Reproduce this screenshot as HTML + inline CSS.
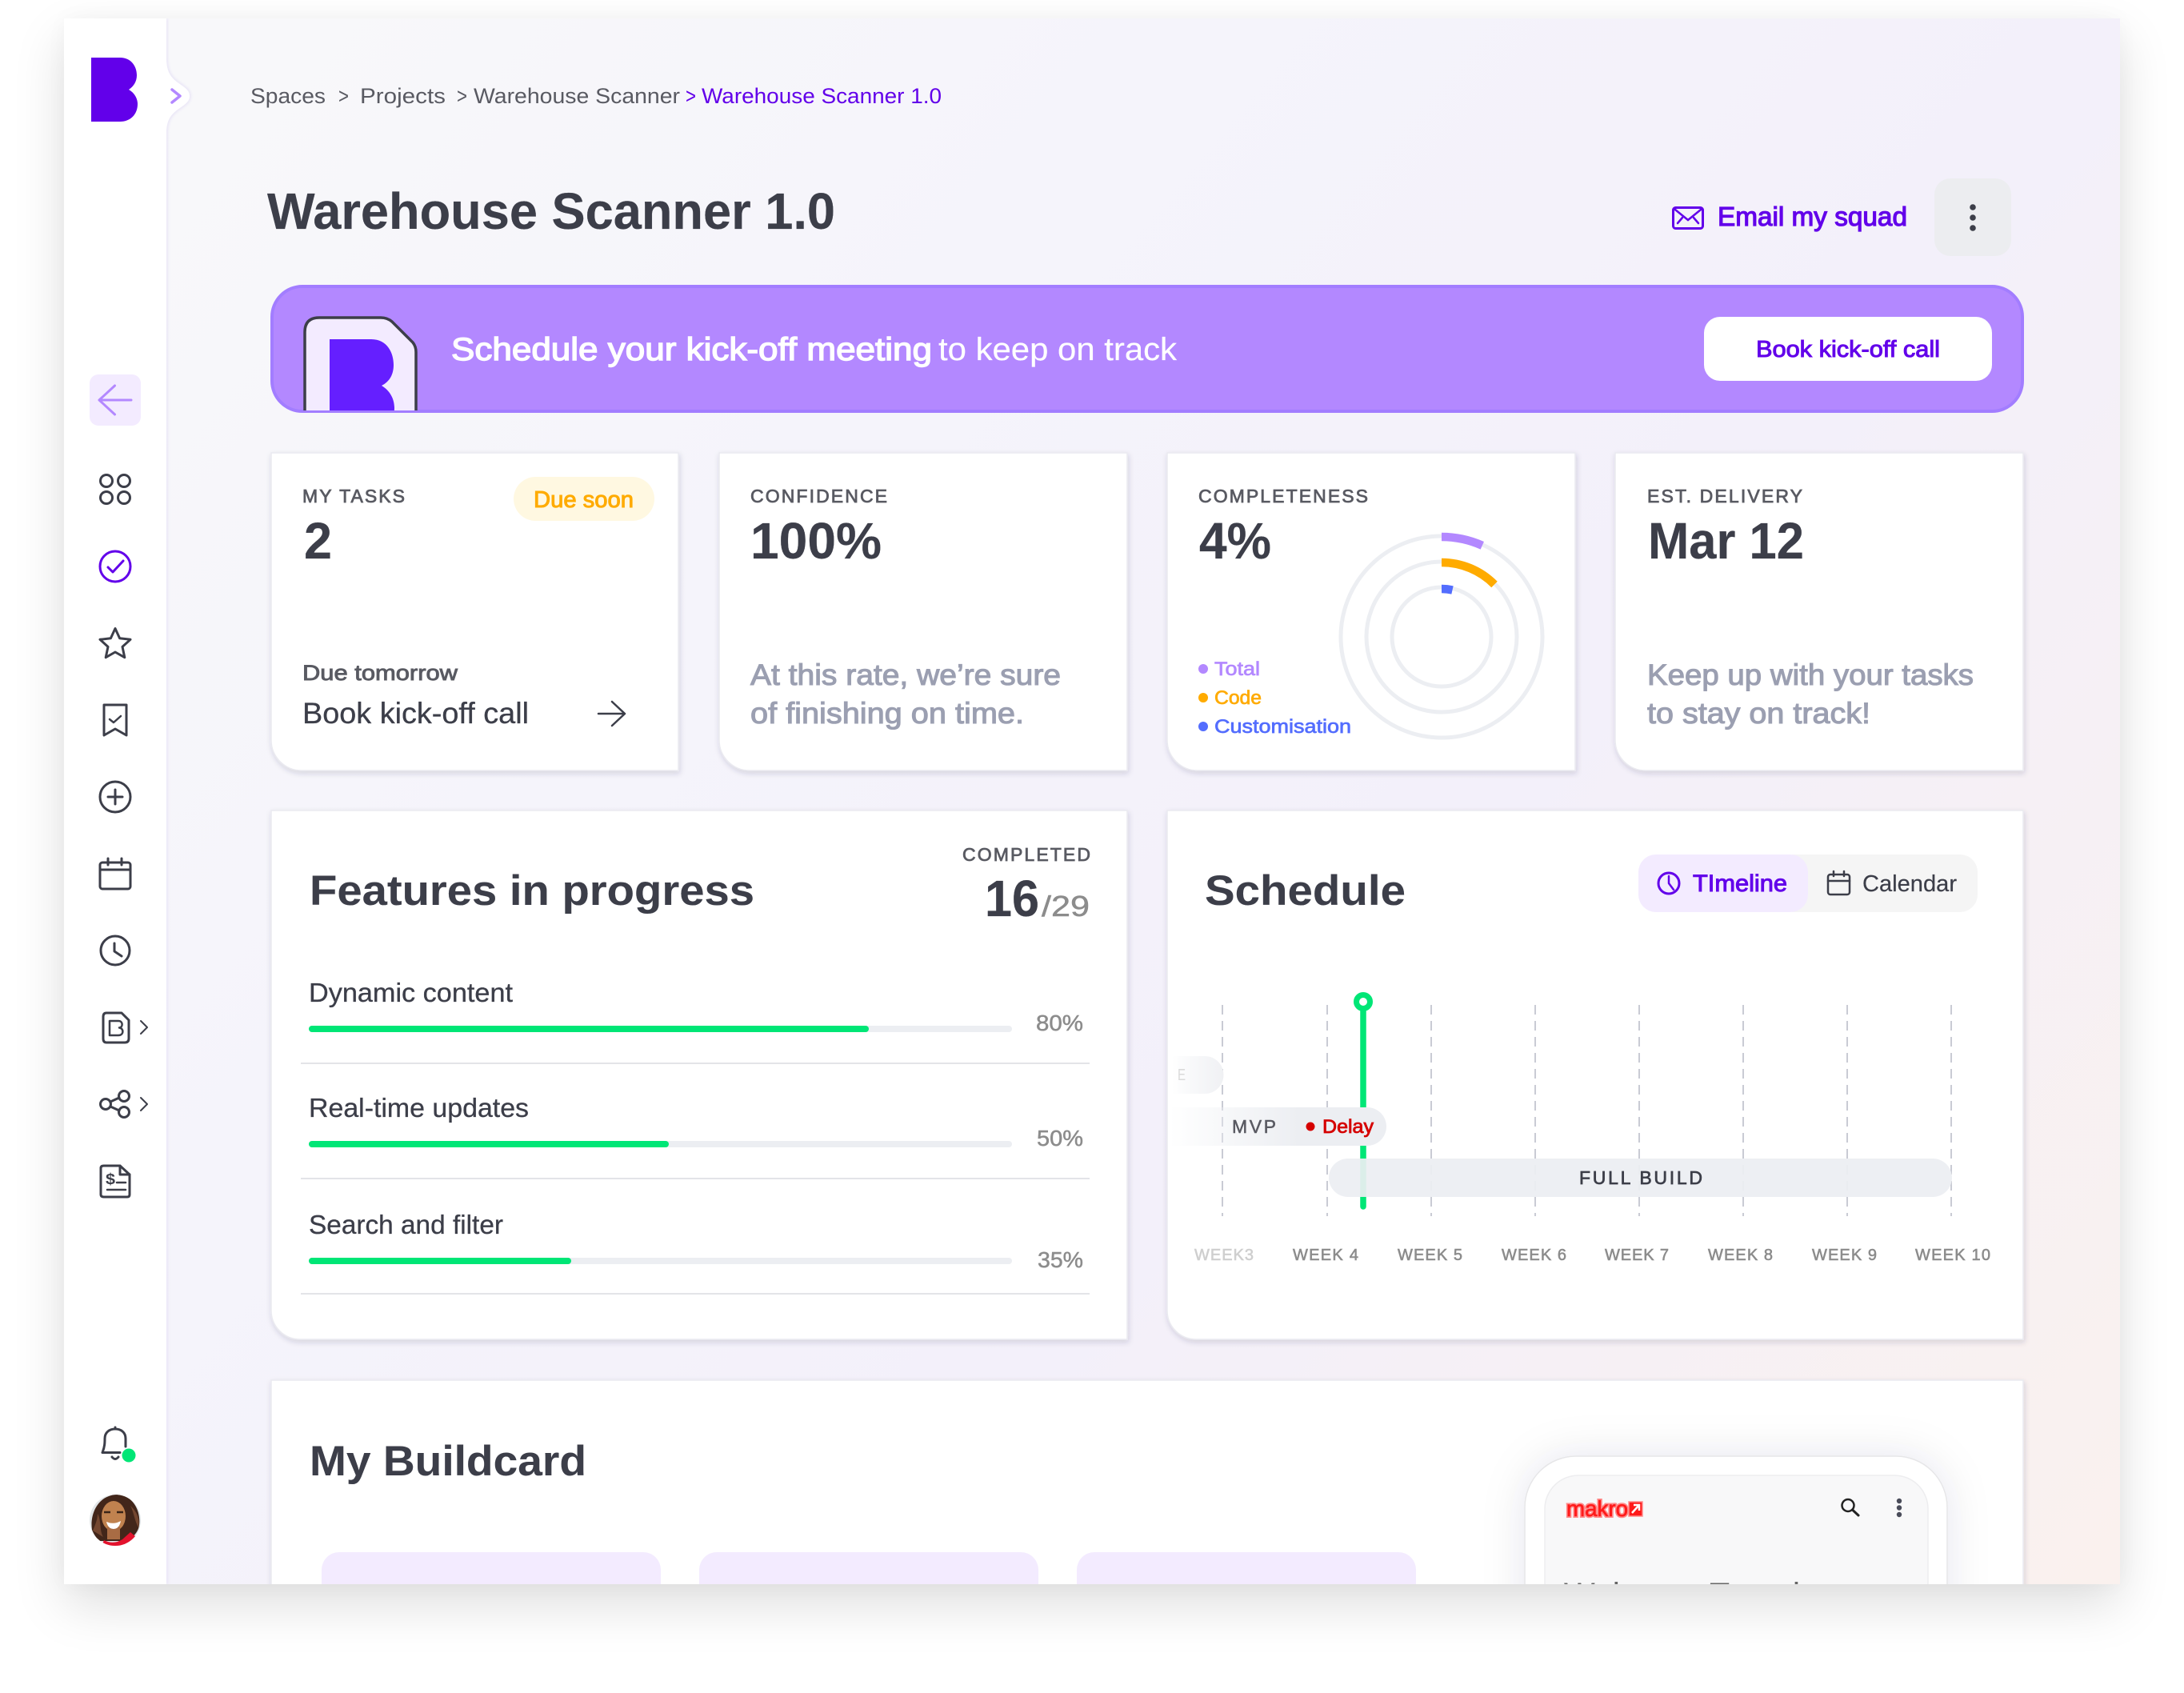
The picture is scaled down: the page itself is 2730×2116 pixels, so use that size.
<!DOCTYPE html>
<html lang="en"><head><meta charset="utf-8"><title>Warehouse Scanner 1.0</title>
<style>
html,body{margin:0;padding:0;background:#fff;width:2730px;height:2116px;overflow:hidden}
#sh{position:absolute;left:80px;top:23px;width:2570px;height:1957px;box-shadow:0 26px 60px rgba(0,0,0,.13),0 0 26px rgba(0,0,0,.03)}
svg{position:absolute;left:0;top:0}
text{font-family:"Liberation Sans",sans-serif;fill:#3c3e49}
.lab{font-size:23px;fill:#595a62;stroke:#595a62;stroke-width:.8}
.big{font-size:64px;font-weight:700;stroke:#3c3e49;stroke-width:.2}
.h2{font-size:53px;font-weight:700;stroke:#3c3e49;stroke-width:.1}
.gr{font-size:37px;fill:#9b9fb1;stroke:#9b9fb1;stroke-width:1.100}
.row{font-size:33px;stroke:#3c3e49;stroke-width:.3}
.pct{font-size:28px;fill:#8c8c8c;stroke:#8c8c8c;stroke-width:.5}
.wk{font-size:20px;fill:#8c8c8c;stroke:#8c8c8c;stroke-width:.6}
.bc{font-size:27px;fill:#595a62}
.i{fill:none;stroke:#3c3e49;stroke-width:3;stroke-linecap:round;stroke-linejoin:round}
.p{fill:#6200ea;stroke:#6200ea}
.d{fill:none;stroke:#c9cbd4;stroke-width:2;stroke-dasharray:12 8}
</style></head><body>
<div id="sh"></div>
<svg width="2730" height="2116" viewBox="0 0 2730 2116" xmlns="http://www.w3.org/2000/svg">
<defs>
<linearGradient id="bg" gradientUnits="userSpaceOnUse" x1="300" y1="23" x2="2650" y2="1980"><stop offset="0" stop-color="#f8f8fa"/><stop offset=".3" stop-color="#f5f4fb"/><stop offset=".6" stop-color="#f3f0fa"/><stop offset="1" stop-color="#faf1ee"/></linearGradient>
<linearGradient id="mv" gradientUnits="userSpaceOnUse" x1="1462" y1="0" x2="1625" y2="0"><stop offset="0" stop-color="#eceef2" stop-opacity="0"/><stop offset="1" stop-color="#eceef2"/></linearGradient>
<linearGradient id="ev" gradientUnits="userSpaceOnUse" x1="1465" y1="0" x2="1529" y2="0"><stop offset="0" stop-color="#eceef2" stop-opacity="0"/><stop offset="1" stop-color="#f0f1f4"/></linearGradient>
<filter id="cs" x="-5%" y="-5%" width="110%" height="112%"><feDropShadow dx="1" dy="3" stdDeviation="3.5" flood-color="#20204a" flood-opacity=".16"/></filter>
<filter id="ps" x="-20%" y="-20%" width="140%" height="140%"><feDropShadow dx="0" dy="0" stdDeviation="26" flood-color="#20204a" flood-opacity=".1"/></filter>
<filter id="ss" x="-50%" y="-5%" width="200%" height="110%"><feGaussianBlur stdDeviation="1.5"/></filter>
<clipPath id="win"><rect x="80" y="23" width="2570" height="1957"/></clipPath>
<clipPath id="ban"><rect x="338" y="356" width="2192" height="158" rx="40"/></clipPath>
<clipPath id="av"><circle cx="144" cy="1900" r="32"/></clipPath>
<clipPath id="phone"><rect x="1931" y="1844" width="479" height="300" rx="42"/></clipPath>
</defs>
<g clip-path="url(#win)">
<rect x="80" y="23" width="2570" height="1957" fill="url(#bg)"/>
<!-- sidebar -->
<path d="M208 23V73C208 90 214 97 222 103C232 110 237 113 237 120C237 127 232 130 222 137C214 143 208 150 208 166V1980" fill="none" stroke="#e8e4f6" stroke-width="3.500" filter="url(#ss)"/>
<path d="M80 23H208V73C208 90 214 97 222 103C232 110 237 113 237 120C237 127 232 130 222 137C214 143 208 150 208 166V1980H80Z" fill="#fff"/>
<path d="M215 112L225 120L215 128" fill="none" stroke="#b388ff" stroke-width="3.500" stroke-linecap="round" stroke-linejoin="round"/>
<path d="M114 72H150C164 72 171 83 171 94C171 102 167 108 161 112C168 116 172 123 172 130C172 143 163 152 150 152H114Z" fill="#6200ea"/>
<rect x="112" y="468" width="64" height="64" rx="11" fill="#f3ebff"/>
<path d="M164 500H124M143.5 482L124 500L143.5 518" fill="none" stroke="#b388ff" stroke-width="3" stroke-linecap="round" stroke-linejoin="round"/>
<g class="i">
<circle cx="133" cy="601" r="7.500"/><circle cx="155" cy="601" r="7.500"/><circle cx="133" cy="622" r="7.500"/><circle cx="155" cy="622" r="7.500"/>
<circle cx="144" cy="708" r="19" style="stroke:#6200ea"/><path d="M135 709L141 715L154 701" style="stroke:#6200ea"/>
<path d="M144 785.500L149.600 797.800L163 799.300L153 808.400L155.800 821.700L144 815L132.200 821.700L135 808.400L125 799.300L138.400 797.800Z"/>
<path d="M130 881H158V919L144 911L130 919Z"/><path d="M137 899L142 903L151 895" style="stroke-width:2.500"/>
<circle cx="144" cy="996" r="19"/><path d="M135 996H153M144 987V1005"/>
<rect x="125" y="1078" width="38" height="33" rx="3"/><path d="M125 1087H163M135 1073V1081M152 1073V1081"/>
<circle cx="144" cy="1188" r="18"/><path d="M143 1179V1189L152 1195"/>
<path d="M133 1266H152L161 1275V1298Q161 1303 156 1303H133Q129 1303 129 1298V1271Q129 1266 133 1266Z"/>
<path d="M137 1276H148C154 1276 154 1284 149 1284.500C155 1285 155 1294 148 1294H137Z" style="stroke-width:2.500"/>
<path d="M176 1276L184 1284L176 1292" style="stroke-width:2"/>
<circle cx="132" cy="1380" r="6.500"/><circle cx="155" cy="1370" r="6.500"/><circle cx="155" cy="1390" r="6.500"/><path d="M138 1377L149 1372M138 1383L149 1388"/>
<path d="M176 1372L184 1380L176 1388" style="stroke-width:2"/>
<path d="M130 1457H150L162 1468V1493Q162 1496 159 1496H130Q126 1496 126 1493V1460Q126 1457 130 1457Z"/><path d="M150 1457V1468H162"/>
<path d="M146 1478H157M134 1487H157" style="stroke-width:2.500"/>
<path d="M128 1815.500C131 1808 131 1803 131 1798C131 1790 137 1786 144 1786C151 1786 157 1790 157 1798V1808M128 1815.500H150M144 1784V1786M140 1821Q144 1826 148 1821"/>
</g>
<text x="132" y="1480" font-size="19" font-weight="700" textLength="12" lengthAdjust="spacingAndGlyphs">$</text>
<circle cx="161" cy="1819" r="8.500" fill="#00e676"/>
<!-- avatar -->
<g clip-path="url(#av)">
<rect x="112" y="1868" width="64" height="64" fill="#e1e5e7"/>
<path d="M115 1912C112 1893 122 1869 146 1868C169 1869 176 1892 174 1906C173 1915 166 1921 160 1926L124 1926C120 1922 117 1917 115 1912Z" fill="#42261a"/>
<path d="M116 1913C119 1906 122 1899 122 1892C127 1901 124 1913 129 1921ZM173 1909C168 1900 167 1889 163 1882C172 1890 175 1900 173 1909Z" fill="#744730"/>
<ellipse cx="142" cy="1895" rx="15" ry="19" fill="#c0824f"/>
<rect x="134" y="1908" width="16" height="16" fill="#a96c44"/>
<path d="M133 1902Q142 1906 151 1901Q149 1911 142 1911Q135 1911 133 1902Z" fill="#fff"/>
<path d="M130 1890h8M146 1890h8" stroke="#3a2418" stroke-width="2.500"/>
<path d="M126 1934L130 1925Q142 1931 153 1924L163 1915L176 1926V1936H126Z" fill="#e3122d"/>
</g>
<!-- breadcrumb -->
<text class="bc" x="313" y="129" textLength="94" lengthAdjust="spacingAndGlyphs">Spaces</text>
<text class="bc" x="423" y="129" textLength="13" lengthAdjust="spacingAndGlyphs">&gt;</text>
<text class="bc" x="450" y="129" textLength="107" lengthAdjust="spacingAndGlyphs">Projects</text>
<text class="bc" x="571" y="129" textLength="13" lengthAdjust="spacingAndGlyphs">&gt;</text>
<text class="bc" x="592" y="129" textLength="258" lengthAdjust="spacingAndGlyphs">Warehouse Scanner</text>
<text class="bc" x="857" y="129" textLength="13" lengthAdjust="spacingAndGlyphs" style="fill:#6200ea">&gt;</text>
<text class="bc" x="877" y="129" textLength="300" lengthAdjust="spacingAndGlyphs" style="fill:#6200ea">Warehouse Scanner 1.0</text>
<!-- title -->
<text class="big" x="334" y="286" textLength="710" lengthAdjust="spacingAndGlyphs">Warehouse Scanner 1.0</text>
<rect x="2091.500" y="259.500" width="37" height="26" rx="3" fill="none" stroke="#6200ea" stroke-width="3"/>
<path d="M2094 262L2110 275L2126 262M2097 279L2103 272M2123 279L2117 272" fill="none" stroke="#6200ea" stroke-width="2.500" stroke-linecap="round"/>
<text class="p" x="2147" y="282" font-size="33" stroke-width="1.200" textLength="237" lengthAdjust="spacingAndGlyphs">Email my squad</text>
<rect x="2418" y="223" width="96" height="97" rx="20" fill="#ecedf0"/>
<circle cx="2466" cy="259" r="3.800" fill="#3c3e49"/><circle cx="2466" cy="272" r="3.800" fill="#3c3e49"/><circle cx="2466" cy="285" r="3.800" fill="#3c3e49"/>
<!-- banner -->
<rect x="340" y="358" width="2188" height="156" rx="38" fill="#b388ff" stroke="#a27dff" stroke-width="4"/>
<g clip-path="url(#ban)">
<path d="M381 530V415Q381 397 399 397H476Q484 397 490 402L516 428Q520 433 520 440V530Z" fill="#f3ebff" stroke="#3c3e49" stroke-width="3.500"/>
<path d="M412 424H464C484 424 492 441 492 456C492 468 487 477 477 482C487 488 493 498 493 510C493 528 480 540 464 540H412Z" fill="#651fff"/>
</g>
<path d="M378 514.500H2490" stroke="#a27dff" stroke-width="3"/>
<text x="564" y="450" font-size="40" style="fill:#fff;stroke:#fff;stroke-width:1.400" textLength="601" lengthAdjust="spacingAndGlyphs">Schedule your kick-off meeting</text>
<text x="1173" y="450" font-size="40" style="fill:#fff;stroke:#fff;stroke-width:.2" textLength="298" lengthAdjust="spacingAndGlyphs">to keep on track</text>
<rect x="2130" y="396" width="360" height="80" rx="20" fill="#fff"/>
<text class="p" x="2195" y="446" font-size="29" stroke-width="1" textLength="230" lengthAdjust="spacingAndGlyphs">Book kick-off call</text>
<!-- stat cards -->
<g fill="#fff" stroke="#eaeaf0" stroke-width="1.500" filter="url(#cs)">
<path d="M339 566H848V963H377A38 38 0 0 1 339 925Z"/>
<path d="M899 566H1409V963H937A38 38 0 0 1 899 925Z"/>
<path d="M1459 566H1969V963H1497A38 38 0 0 1 1459 925Z"/>
<path d="M2019 566H2529V963H2057A38 38 0 0 1 2019 925Z"/>
<path d="M339 1013H1409V1674H375A36 36 0 0 1 339 1638Z"/>
<path d="M1459 1013H2529V1674H1495A36 36 0 0 1 1459 1638Z"/>
<path d="M339 1725H2529V2100H339Z"/>
</g>
<text class="lab" x="378" y="628" textLength="128">MY TASKS</text>
<text class="big" x="380" y="698" textLength="35" lengthAdjust="spacingAndGlyphs">2</text>
<rect x="642" y="596" width="176" height="55" rx="27.500" fill="#fff8e1"/>
<text x="667" y="634" font-size="29" style="fill:#ffab00;stroke:#ffab00;stroke-width:1" textLength="125" lengthAdjust="spacingAndGlyphs">Due soon</text>
<text x="378" y="850" font-size="27" style="fill:#595a62;stroke:#595a62;stroke-width:.9" textLength="194" lengthAdjust="spacingAndGlyphs">Due tomorrow</text>
<text x="378" y="904" font-size="37" style="stroke:#3c3e49;stroke-width:.3" textLength="283" lengthAdjust="spacingAndGlyphs">Book kick-off call</text>
<path d="M748 892H781M765 877L781 892L765 907" fill="none" stroke="#3c3e49" stroke-width="2.500" stroke-linecap="round" stroke-linejoin="round"/>

<text class="lab" x="938" y="628" textLength="171">CONFIDENCE</text>
<text class="big" x="938" y="698" textLength="164" lengthAdjust="spacingAndGlyphs">100%</text>
<text class="gr" x="938" y="856" textLength="388" lengthAdjust="spacingAndGlyphs">At this rate, we’re sure</text>
<text class="gr" x="938" y="904" textLength="342" lengthAdjust="spacingAndGlyphs">of finishing on time.</text>

<text class="lab" x="1498" y="628" textLength="212">COMPLETENESS</text>
<text class="big" x="1499" y="698" textLength="90" lengthAdjust="spacingAndGlyphs">4%</text>
<g fill="none" stroke="#eceef2" stroke-width="5"><circle cx="1802" cy="796" r="126"/><circle cx="1802" cy="796" r="94"/><circle cx="1802" cy="796" r="62"/></g>
<g fill="none" stroke-width="10.500">
<path d="M1802 671A125 125 0 0 1 1852.800 681.800" stroke="#b388ff"/>
<path d="M1802 703A93 93 0 0 1 1868 730.500" stroke="#ffab00"/>
<path d="M1802 736A60 60 0 0 1 1815.500 737.500" stroke="#536dfe"/>
</g>
<circle cx="1504" cy="836" r="6" fill="#b388ff"/><circle cx="1504" cy="872" r="6" fill="#ffab00"/><circle cx="1504" cy="908" r="6" fill="#536dfe"/>
<text x="1518" y="844" font-size="24" style="fill:#b388ff;stroke:#b388ff;stroke-width:.7" textLength="57" lengthAdjust="spacingAndGlyphs">Total</text>
<text x="1518" y="880" font-size="24" style="fill:#ffab00;stroke:#ffab00;stroke-width:.7" textLength="59" lengthAdjust="spacingAndGlyphs">Code</text>
<text x="1518" y="916" font-size="24" style="fill:#536dfe;stroke:#536dfe;stroke-width:.7" textLength="171" lengthAdjust="spacingAndGlyphs">Customisation</text>

<text class="lab" x="2059" y="628" textLength="194">EST. DELIVERY</text>
<text class="big" x="2060" y="698" textLength="195" lengthAdjust="spacingAndGlyphs">Mar 12</text>
<text class="gr" x="2059" y="856" textLength="408" lengthAdjust="spacingAndGlyphs">Keep up with your tasks</text>
<text class="gr" x="2059" y="904" textLength="279" lengthAdjust="spacingAndGlyphs">to stay on track!</text>
<!-- features -->
<text class="h2" x="387" y="1131" textLength="556" lengthAdjust="spacingAndGlyphs">Features in progress</text>
<text class="lab" x="1203" y="1076" textLength="160">COMPLETED</text>
<text class="big" x="1231" y="1145" font-size="62" textLength="68" lengthAdjust="spacingAndGlyphs">16</text>
<text x="1302" y="1145" font-size="36" style="fill:#8c8c8c;stroke:#8c8c8c;stroke-width:.5" textLength="60" lengthAdjust="spacingAndGlyphs">/29</text>
<text class="row" x="386" y="1252" textLength="255" lengthAdjust="spacingAndGlyphs">Dynamic content</text>
<rect x="386" y="1282" width="879" height="8" rx="4" fill="#eceef2"/><rect x="386" y="1282" width="700" height="8" rx="4" fill="#00e676"/>
<text class="pct" x="1295" y="1288" textLength="59" lengthAdjust="spacingAndGlyphs">80%</text>
<rect x="376" y="1328" width="986" height="2" fill="#e3e4e8"/>
<text class="row" x="386" y="1396" textLength="275" lengthAdjust="spacingAndGlyphs">Real-time updates</text>
<rect x="386" y="1426" width="879" height="8" rx="4" fill="#eceef2"/><rect x="386" y="1426" width="450" height="8" rx="4" fill="#00e676"/>
<text class="pct" x="1296" y="1432" textLength="58" lengthAdjust="spacingAndGlyphs">50%</text>
<rect x="376" y="1472" width="986" height="2" fill="#e3e4e8"/>
<text class="row" x="386" y="1542" textLength="243" lengthAdjust="spacingAndGlyphs">Search and filter</text>
<rect x="386" y="1572" width="879" height="8" rx="4" fill="#eceef2"/><rect x="386" y="1572" width="328" height="8" rx="4" fill="#00e676"/>
<text class="pct" x="1297" y="1584" textLength="57" lengthAdjust="spacingAndGlyphs">35%</text>
<rect x="376" y="1616" width="986" height="2" fill="#e3e4e8"/>
<!-- schedule -->
<text class="h2" x="1506" y="1131" textLength="251" lengthAdjust="spacingAndGlyphs">Schedule</text>
<path d="M2240 1068H2450A22 22 0 0 1 2472 1090V1118A22 22 0 0 1 2450 1140H2240Z" fill="#f5f5f5"/>
<rect x="2048" y="1068" width="212" height="72" rx="22" fill="#f3ebff"/>
<circle cx="2086" cy="1104" r="13" fill="none" stroke="#6200ea" stroke-width="3"/><path d="M2086 1095V1104L2092 1112" fill="none" stroke="#6200ea" stroke-width="2.500" stroke-linecap="round" stroke-linejoin="round"/>
<text class="p" x="2116" y="1114" font-size="30" stroke-width="1" textLength="118" lengthAdjust="spacingAndGlyphs">TImeline</text>
<rect x="2285" y="1093" width="27" height="25" rx="3" class="i" style="stroke-width:2.500"/><path d="M2285 1101H2312M2292 1089V1095M2305 1089V1095" class="i" style="stroke-width:2.500"/>
<text x="2328" y="1114" font-size="29" style="stroke:#3c3e49;stroke-width:.2" textLength="118" lengthAdjust="spacingAndGlyphs">Calendar</text>
<g class="d"><path d="M1528 1256V1520"/><path d="M1659 1256V1520"/><path d="M1789 1256V1520"/><path d="M1919 1256V1520"/><path d="M2049 1256V1520"/><path d="M2179 1256V1520"/><path d="M2309 1256V1520"/><path d="M2439 1256V1520"/></g>
<path d="M1704 1256V1508" stroke="#00e676" stroke-width="7.500" stroke-linecap="round"/>
<circle cx="1704" cy="1252" r="8.500" fill="#fff" stroke="#00e676" stroke-width="7"/>
<path d="M1465 1320H1506A23.500 23.500 0 0 1 1506 1367H1465Z" fill="url(#ev)"/>
<text x="1472" y="1350" font-size="20" style="fill:#dadada" textLength="10" lengthAdjust="spacingAndGlyphs">E</text>
<path d="M1462 1384H1709A24 24 0 0 1 1709 1432H1462Z" fill="url(#mv)"/>
<text x="1540" y="1416" font-size="23" style="fill:#595a62;stroke:#595a62;stroke-width:.5" textLength="55">MVP</text>
<circle cx="1638" cy="1408" r="5.500" fill="#d50000"/>
<text x="1653" y="1416" font-size="24" style="fill:#d50000;stroke:#d50000;stroke-width:.8" textLength="64" lengthAdjust="spacingAndGlyphs">Delay</text>
<rect x="1661" y="1448" width="779" height="48" rx="24" fill="#eceef2" fill-opacity=".93"/>
<text x="1974" y="1480" font-size="23" style="stroke:#3c3e49;stroke-width:.7" textLength="154">FULL BUILD</text>
<text class="wk" x="1493" y="1575" textLength="74" style="fill:#cfcfcf;stroke:#cfcfcf">WEEK3</text>
<text class="wk" x="1616" y="1575" textLength="82">WEEK 4</text>
<text class="wk" x="1747" y="1575" textLength="81">WEEK 5</text>
<text class="wk" x="1877" y="1575" textLength="81">WEEK 6</text>
<text class="wk" x="2006" y="1575" textLength="80">WEEK 7</text>
<text class="wk" x="2135" y="1575" textLength="81">WEEK 8</text>
<text class="wk" x="2265" y="1575" textLength="81">WEEK 9</text>
<text class="wk" x="2394" y="1575" textLength="94">WEEK 10</text>
<!-- buildcard -->
<text class="h2" x="387" y="1844" textLength="346" lengthAdjust="spacingAndGlyphs">My Buildcard</text>
<rect x="402" y="1940" width="424" height="80" rx="22" fill="#f3ebff"/>
<rect x="874" y="1940" width="424" height="80" rx="22" fill="#f3ebff"/>
<rect x="1346" y="1940" width="424" height="80" rx="22" fill="#f3ebff"/>
<rect x="1906" y="1820" width="528" height="300" rx="64" fill="#fff" stroke="#e6e6e8" stroke-width="1.500" filter="url(#ps)"/>
<rect x="1931" y="1844" width="479" height="300" rx="42" fill="#f8f8f9" stroke="#ededef" stroke-width="1.500"/>
<g clip-path="url(#phone)">
<text x="1958" y="1895" font-size="28" style="fill:#ff1a1a;stroke:#ff8a8a;stroke-width:4" textLength="77" lengthAdjust="spacingAndGlyphs">makro</text>
<text x="1958" y="1895" font-size="28" style="fill:#ff1a1a;stroke:#ff1a1a;stroke-width:.6" textLength="77" lengthAdjust="spacingAndGlyphs">makro</text>
<rect x="2036" y="1877" width="17" height="18" fill="#ff1a1a" stroke="#ff8a8a" stroke-width="1.500"/><path d="M2040 1891L2049 1881M2042 1881H2049V1888" stroke="#fff" stroke-width="2.500" fill="none"/>
<circle cx="2310" cy="1881.500" r="7.500" fill="none" stroke="#222" stroke-width="2.500"/><path d="M2315.500 1887L2323 1894" stroke="#222" stroke-width="3" stroke-linecap="round"/>
<circle cx="2374" cy="1876" r="3.200" fill="#4a4c5a"/><circle cx="2374" cy="1884.500" r="3.200" fill="#4a4c5a"/><circle cx="2374" cy="1893" r="3.200" fill="#4a4c5a"/>
<text x="1955" y="2006" font-size="40" style="fill:#666" textLength="170" lengthAdjust="spacingAndGlyphs">Welcome</text>
<text x="2137" y="2006" font-size="40" style="fill:#666" textLength="113" lengthAdjust="spacingAndGlyphs">Travel</text>
</g>
</g>
</svg>
</body></html>
